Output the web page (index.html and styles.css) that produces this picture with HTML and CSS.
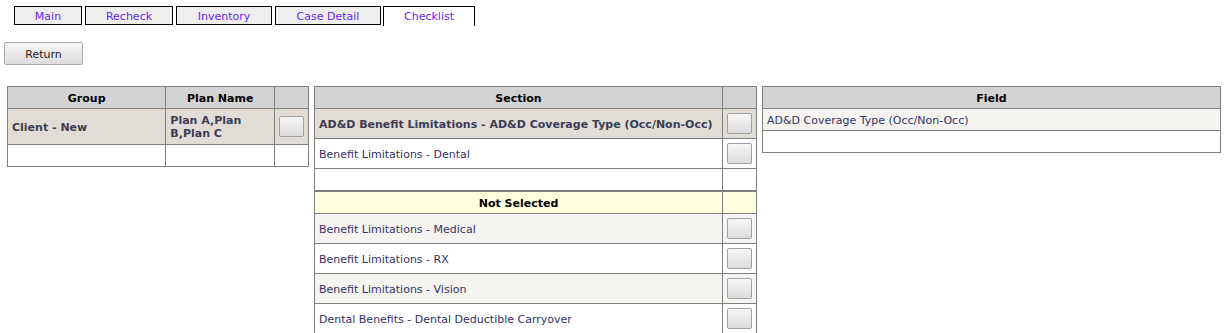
FILE: index.html
```html
<!DOCTYPE html>
<html lang="en">
<head>
  <meta charset="UTF-8">
  <title>Checklist</title>
  <link rel="stylesheet" href="styles.css">
</head>
<body>
  <div class="tabs">
    <a class="tab tab-main">Main</a>
    <a class="tab tab-recheck">Recheck</a>
    <a class="tab tab-inventory">Inventory</a>
    <a class="tab tab-case">Case Detail</a>
    <a class="tab tab-checklist active">Checklist</a>
  </div>

  <div class="actions">
    <button class="return-btn">Return</button>
  </div>

  <div class="grids">
    <table class="grid grid-group">
      <tr>
        <th class="col-group">Group</th>
        <th class="col-plan">Plan Name</th>
        <th class="col-btn"></th>
      </tr>
      <tr class="selected tall">
        <td class="strong">Client - New</td>
        <td class="strong">Plan A,Plan B,Plan C</td>
        <td class="col-btn"><button class="pick"></button></td>
      </tr>
      <tr class="empty">
        <td></td><td></td><td></td>
      </tr>
    </table>

    <table class="grid grid-section">
      <tr>
        <th class="col-section">Section</th>
        <th class="col-btn"></th>
      </tr>
      <tr class="selected row">
        <td class="strong">AD&amp;D Benefit Limitations - AD&amp;D Coverage Type (Occ/Non-Occ)</td>
        <td class="col-btn"><button class="pick"></button></td>
      </tr>
      <tr class="row">
        <td>Benefit Limitations - Dental</td>
        <td class="col-btn"><button class="pick"></button></td>
      </tr>
      <tr class="empty">
        <td></td><td></td>
      </tr>
      <tr class="subhead">
        <th>Not Selected</th>
        <th></th>
      </tr>
      <tr class="row alt">
        <td>Benefit Limitations - Medical</td>
        <td class="col-btn"><button class="pick"></button></td>
      </tr>
      <tr class="row">
        <td>Benefit Limitations - RX</td>
        <td class="col-btn"><button class="pick"></button></td>
      </tr>
      <tr class="row alt">
        <td>Benefit Limitations - Vision</td>
        <td class="col-btn"><button class="pick"></button></td>
      </tr>
      <tr class="row">
        <td>Dental Benefits - Dental Deductible Carryover</td>
        <td class="col-btn"><button class="pick"></button></td>
      </tr>
    </table>

    <table class="grid grid-field">
      <tr>
        <th>Field</th>
      </tr>
      <tr class="alt">
        <td>AD&amp;D Coverage Type (Occ/Non-Occ)</td>
      </tr>
      <tr class="empty">
        <td></td>
      </tr>
    </table>
  </div>
</body>
</html>
```

FILE: styles.css
```css
body {
  margin: 0;
  font-family: "DejaVu Sans", Verdana, sans-serif;
  font-size: 11px;
  color: #333366;
  background: #ffffff;
}
.tabs {
  display: flex;
  align-items: flex-start;
  padding: 6px 0 0 14px;
  height: 19px;
}
.tab {
  display: block;
  box-sizing: border-box;
  height: 19px;
  line-height: 19px;
  border: 1px solid #000000;
  background: #eeeeee;
  color: #6a1ff2;
  text-align: center;
  margin-right: 3px;
  cursor: pointer;
}
.tab-main { width: 68px; }
.tab-recheck { width: 88px; }
.tab-inventory { width: 96px; }
.tab-case { width: 106px; margin-right: 2px; }
.tab-checklist { width: 92px; }
.tab.active {
  background: #ffffff;
  border-bottom: none;
  height: 20px;
}
.actions {
  padding: 17px 0 0 4px;
}
.return-btn {
  display: block;
  width: 79px;
  height: 23px;
  padding-top: 2px;
  font-family: inherit;
  font-size: 11px;
  color: #222222;
  border: 1px solid #a9a9a9;
  border-radius: 2px;
  background: linear-gradient(#f6f6f6, #dddddd);
  cursor: pointer;
}
.grids {
  display: flex;
  align-items: flex-start;
  gap: 5px;
  padding: 21px 0 0 7px;
}
.grid {
  border-collapse: collapse;
  border: 1px solid #808080;
}
.grid th,
.grid td {
  border: 1px solid #808080;
  padding: 1px 4px 0;
  text-align: left;
  vertical-align: middle;
}
.grid th {
  background: #d3d3d3;
  color: #000000;
  font-weight: bold;
  text-align: center;
  height: 20px;
}
.grid td {
  height: 20px;
}
.grid-group { width: 302px; }
.grid-section { width: 443px; }
.grid-field { width: 459px; }
.col-group { width: 150px; }
.col-plan { width: 100px; }
.col-btn { width: 25px; }
.grid td.col-btn { text-align: center; padding: 0 4px; }
.selected td {
  background: #e1ddd6;
  color: #3c3c54;
}
.tall td {
  height: 34px;
}
.row td {
  height: 28px;
}
.grid .row td.col-btn {
  height: 29px;
}
.alt td {
  background: #f5f4f0;
}
.strong {
  font-weight: bold;
}
.subhead th {
  background: #ffffe0;
  border-top: 2px solid #808080;
  height: 20px;
}
.pick {
  display: block;
  margin: 0 auto;
  width: 25px;
  height: 21px;
  padding: 0;
  border: 1px solid #a0a0a0;
  border-radius: 2px;
  background: linear-gradient(#f7f7f7, #dcdcdc);
  cursor: pointer;
}
```
